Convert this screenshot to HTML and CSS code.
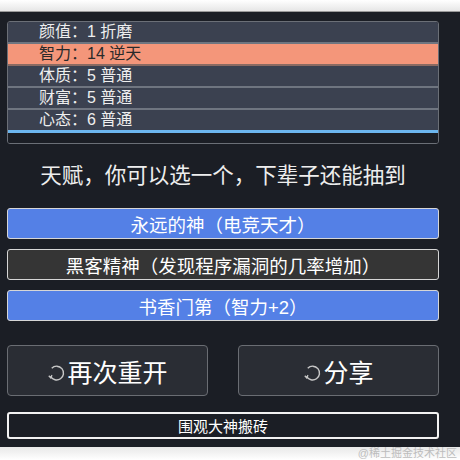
FILE: index.html
```html
<!DOCTYPE html>
<html lang="zh">
<head>
    <meta charset="UTF-8">
    <meta name="viewport" content="width=device-width, initial-scale=1.0">
    <title>人生重开</title>
    <link rel="stylesheet" href="styles.css">
</head>
<body>
    <div class="topbar"></div>

    <div class="page">
        <!-- 属性 -->
        <div class="stats">
            <div class="stat">颜值：1 折磨</div>
            <div class="stat hot">智力：14 逆天</div>
            <div class="stat">体质：5 普通</div>
            <div class="stat">财富：5 普通</div>
            <div class="stat">心态：6 普通</div>
            <div class="stat-bar"></div>
            <div class="stat-foot"></div>
        </div>

        <h2 class="title">天赋，你可以选一个，下辈子还能抽到</h2>

        <div class="talents">
            <button class="talent blue">永远的神（电竞天才）</button>
            <button class="talent dark">黑客精神（发现程序漏洞的几率增加）</button>
            <button class="talent blue">书香门第（智力+2）</button>
        </div>

        <div class="actions">
            <button class="big-btn">
                <svg class="ico" viewBox="0 0 16 16" width="19" height="19">
                    <path d="M3.0 10.4 A5.8 5.8 0 1 0 4.0 3.5" fill="none" stroke="#c8c8c8" stroke-width="1.2"/>
                    <path d="M1.5 9.9 L3.1 11.6 L4.2 9.4" fill="none" stroke="#c8c8c8" stroke-width="1.1"/>
                </svg>再次重开
            </button>
            <button class="big-btn">
                <svg class="ico" viewBox="0 0 16 16" width="19" height="19">
                    <path d="M3.0 10.4 A5.8 5.8 0 1 0 4.0 3.5" fill="none" stroke="#c8c8c8" stroke-width="1.2"/>
                    <path d="M1.5 9.9 L3.1 11.6 L4.2 9.4" fill="none" stroke="#c8c8c8" stroke-width="1.1"/>
                </svg>分享
            </button>
        </div>

        <button class="watch-btn">围观大神搬砖</button>
    </div>

    <div class="footer">@稀土掘金技术社区</div>
</body>
</html>
```

FILE: styles.css
```css
body {
    margin: 0;
    padding: 0;
    background: #fff;
    font-family: "Liberation Sans", "Noto Sans CJK SC", sans-serif;
    color: #eee;
    overflow: hidden;
}

.topbar {
    height: 11px;
    background: linear-gradient(to bottom, #ffffff, #e6e6e6);
    border-bottom: 1px solid #9a9a9a;
}

.page {
    background: #1b1e25;
    height: 435px;
    padding: 9px 21px 0 7px;
    box-sizing: border-box;
}

/* 属性面板 */
.stats {
    border: 1px solid #6b6f77;
    border-radius: 3px;
    background: #1b1e25;
    overflow: hidden;
}

.stat {
    height: 20px;
    line-height: 20px;
    padding-left: 31px;
    font-size: 16px;
    background: #3b4150;
    border-bottom: 2px solid #6f7580;
    color: #eee;
}

.stat.hot {
    background: #f4967a;
    color: #2a2a2a;
    border-bottom-color: #8a6a62;
}

.stat-bar {
    height: 3px;
    background: #6cb6ef;
    margin-top: -2px;
}

.stat-foot {
    height: 10px;
    background: #1b1e25;
}

.title {
    margin: 14px 0 0;
    height: 36px;
    line-height: 36px;
    text-align: center;
    font-size: 21.5px;
    font-weight: normal;
    color: #eee;
}

.talents {
    display: flex;
    flex-direction: column;
    gap: 10px;
    margin-top: 14px;
}

.talent {
    height: 31px;
    border: 1px solid #d6d6d6;
    border-radius: 3px;
    color: #fff;
    font-family: inherit;
    font-size: 18.5px;
    padding: 0;
    cursor: pointer;
}

.talent.blue {
    background: #5480e6;
}

.talent.dark {
    background: #353535;
}

.actions {
    display: flex;
    justify-content: space-between;
    margin-top: 24px;
}

.big-btn {
    width: 201px;
    height: 51px;
    background: #2a2d34;
    border: 1px solid #6a6d73;
    border-radius: 4px;
    color: #fff;
    font-family: inherit;
    font-size: 25px;
    display: flex;
    align-items: center;
    justify-content: center;
    padding: 0;
    cursor: pointer;
}

.ico {
    margin-right: 1px;
    margin-top: 5px;
}

.watch-btn {
    display: block;
    width: 100%;
    height: 27px;
    margin-top: 16px;
    background: #1b1e25;
    border: 2px solid #f2f2f2;
    border-radius: 3px;
    color: #fff;
    font-family: inherit;
    font-size: 15px;
    padding: 0;
    cursor: pointer;
}

.footer {
    height: 13px;
    line-height: 13px;
    text-align: right;
    padding-right: 3px;
    font-size: 11px;
    color: #bdbdbd;
    background: linear-gradient(to bottom, #e8e8e8, #ffffff);
}
```
